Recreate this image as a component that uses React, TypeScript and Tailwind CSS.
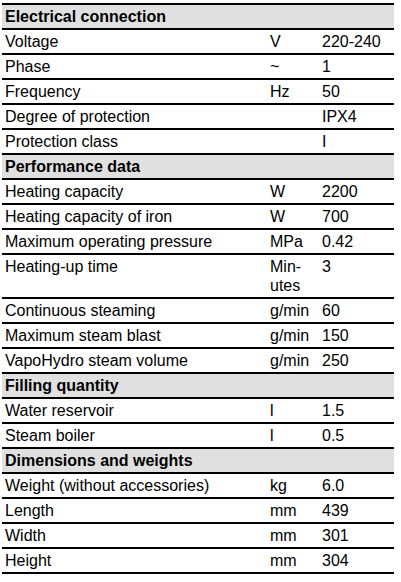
type Row =
  | { kind: "head"; label: string }
  | { kind: "row"; label: string; unit?: React.ReactNode; value?: string };

const rows: Row[] = [
  { kind: "head", label: "Electrical connection" },
  { kind: "row", label: "Voltage", unit: "V", value: "220-240" },
  { kind: "row", label: "Phase", unit: "~", value: "1" },
  { kind: "row", label: "Frequency", unit: "Hz", value: "50" },
  { kind: "row", label: "Degree of protection", value: "IPX4" },
  { kind: "row", label: "Protection class", value: "I" },
  { kind: "head", label: "Performance data" },
  { kind: "row", label: "Heating capacity", unit: "W", value: "2200" },
  { kind: "row", label: "Heating capacity of iron", unit: "W", value: "700" },
  { kind: "row", label: "Maximum operating pressure", unit: "MPa", value: "0.42" },
  {
    kind: "row",
    label: "Heating-up time",
    unit: (
      <>
        Min-
        <br />
        utes
      </>
    ),
    value: "3",
  },
  { kind: "row", label: "Continuous steaming", unit: "g/min", value: "60" },
  { kind: "row", label: "Maximum steam blast", unit: "g/min", value: "150" },
  { kind: "row", label: "VapoHydro steam volume", unit: "g/min", value: "250" },
  { kind: "head", label: "Filling quantity" },
  { kind: "row", label: "Water reservoir", unit: "l", value: "1.5" },
  { kind: "row", label: "Steam boiler", unit: "l", value: "0.5" },
  { kind: "head", label: "Dimensions and weights" },
  { kind: "row", label: "Weight (without accessories)", unit: "kg", value: "6.0" },
  { kind: "row", label: "Length", unit: "mm", value: "439" },
  { kind: "row", label: "Width", unit: "mm", value: "301" },
  { kind: "row", label: "Height", unit: "mm", value: "304" },
];

export default function App() {
  return (
    <div
      className="w-[401px] h-[582px] bg-white text-black text-[16px] leading-[19px]"
      style={{ fontFamily: '"Liberation Sans", Arial, sans-serif' }}
    >
      <div className="ml-[2px] pt-[3px] w-[392px]">
        <div className="border-t-2 border-black">
          {rows.map((r, i) =>
            r.kind === "head" ? (
              <div
                key={i}
                className="bg-[#e0e0e0] border-b-2 border-black px-[3px] py-[2px] font-bold"
              >
                {r.label}
              </div>
            ) : (
              <div
                key={i}
                className="grid grid-cols-[265px_52px_1fr] border-b-2 border-black py-[2px]"
              >
                <div className="pl-[3px]">{r.label}</div>
                <div className="pl-[3px]">{r.unit}</div>
                <div className="pl-[3px]">{r.value}</div>
              </div>
            )
          )}
        </div>
      </div>
    </div>
  );
}
